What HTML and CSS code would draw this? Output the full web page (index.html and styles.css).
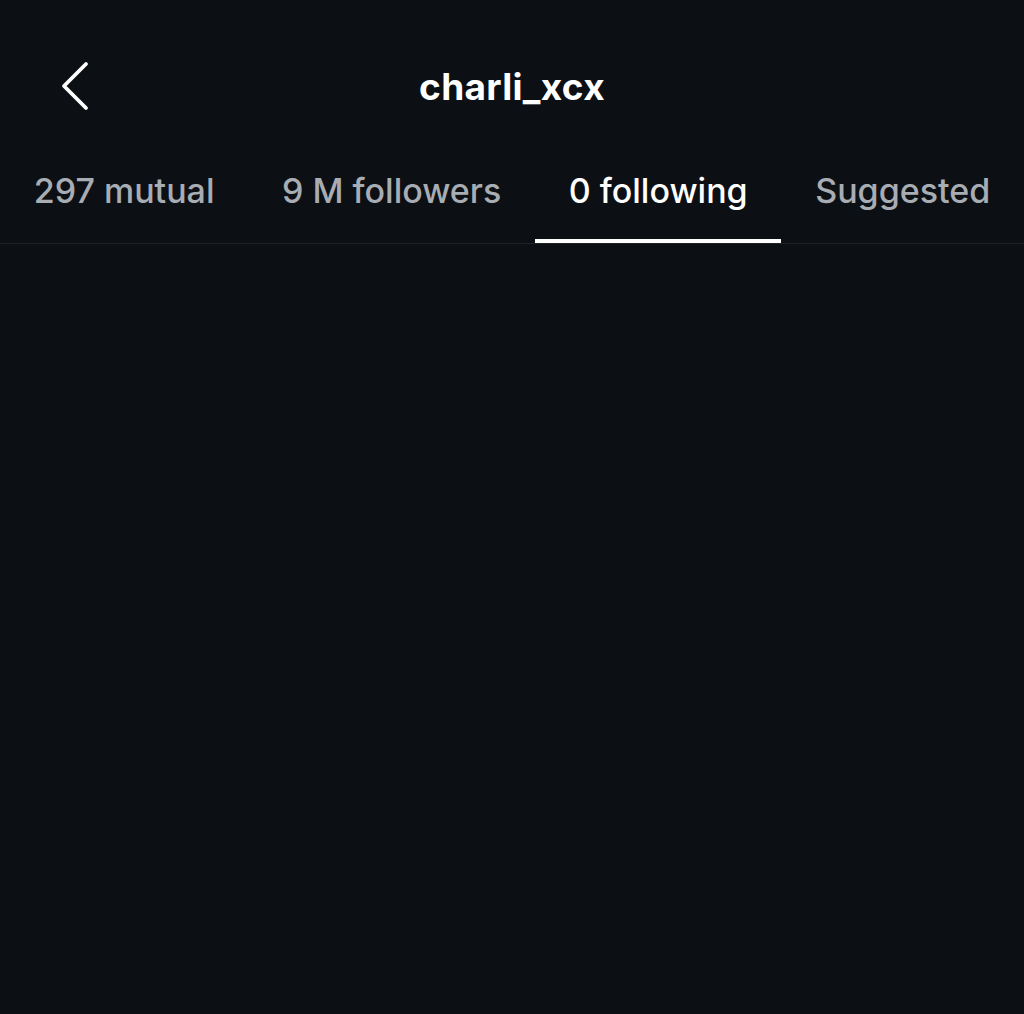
FILE: index.html
```html
<!DOCTYPE html>
<html lang="en">
<head>
    <meta charset="UTF-8">
    <meta name="viewport" content="width=device-width, initial-scale=1.0">
    <title>charli_xcx</title>
    <link rel="stylesheet" href="styles.css">
</head>
<body>
    <div class="screen">
        <header class="topbar">
            <a class="back" href="#" aria-label="Back">
                <svg width="32" height="52" viewBox="0 0 32 52">
                    <path d="M27 4 L5 26 L27 48" fill="none" stroke="#fff" stroke-width="3.8" stroke-linecap="round" stroke-linejoin="round"/>
                </svg>
            </a>
            <h1 class="title">charli_xcx</h1>
        </header>

        <nav class="tabs">
            <a class="tab" href="#">297 mutual</a>
            <a class="tab" href="#">9 M followers</a>
            <a class="tab active" href="#">0 following</a>
            <a class="tab" href="#">Suggested</a>
        </nav>

        <div class="list">
            <!-- nobody here -->
        </div>
    </div>
</body>
</html>
```

FILE: styles.css
```css
* {
    box-sizing: border-box;
}
html, body {
    margin: 0;
    padding: 0;
    background-color: #0c1014;
}
body {
    font-family: Inter, "Noto Sans", "Liberation Sans", sans-serif;
    color: #fff;
}
.screen {
    width: 1024px;
    min-height: 1014px;
}
.topbar {
    position: relative;
    display: flex;
    justify-content: center;
    align-items: flex-start;
    height: 146px;
}
.title {
    margin: 0;
    margin-top: 59px;
    font-size: 37px;
    font-weight: 700;
    line-height: 56px;
    letter-spacing: 0.3px;
}
.back {
    position: absolute;
    left: 59px;
    top: 60px;
    display: flex;
}
.tabs {
    display: flex;
    border-bottom: 1px solid #1f2327;
}
.tab {
    flex: 1 1 auto;
    display: flex;
    justify-content: center;
    align-items: center;
    height: 97px;
    padding: 0 28px 4px;
    border-bottom: 4px solid transparent;
    color: #a8acb3;
    font-size: 34px;
    font-weight: 500;
    text-decoration: none;
    white-space: nowrap;
}
.tab.active {
    color: #fff;
    border-bottom-color: #fff;
}
.list {
    flex: 1;
}
```
